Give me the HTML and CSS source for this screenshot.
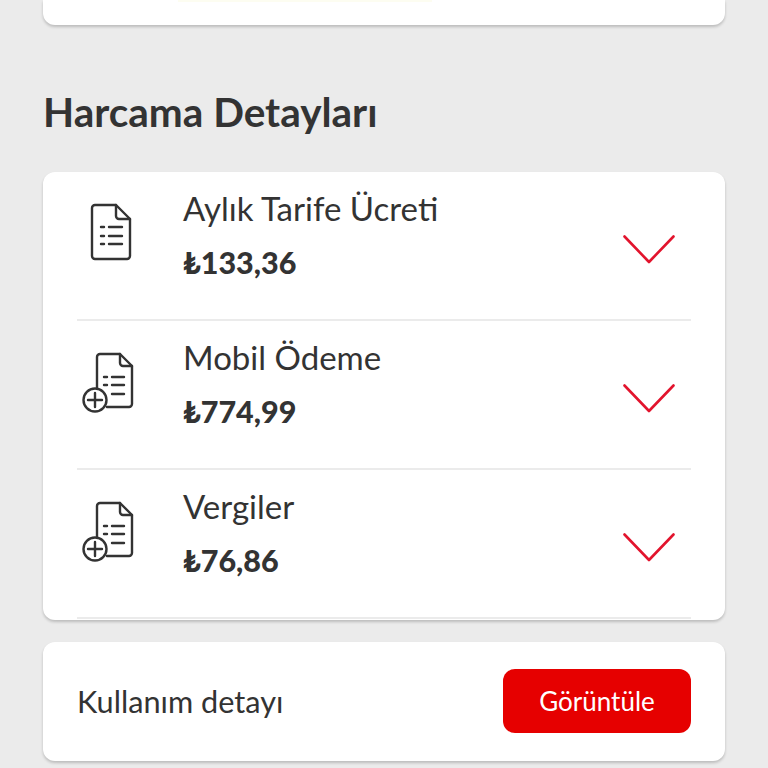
FILE: index.html
```html
<!DOCTYPE html>
<html lang="tr">
<head>
    <meta charset="UTF-8">
    <meta name="viewport" content="width=device-width, initial-scale=1.0">
    <title>Harcama Detayları</title>
    <link rel="stylesheet" href="styles.css">
</head>
<body>
    <div class="card top-card"><div class="top-glow"></div></div>

    <h1>Harcama Detayları</h1>

    <div class="card details">
        <div class="row">
            <svg class="doc-icon" width="60" height="64" viewBox="0 0 60 64" fill="none" stroke="#333" stroke-width="2.4" stroke-linecap="round" stroke-linejoin="round">
                <path d="M13 4h21l14 14v37a3 3 0 0 1-3 3H13a3 3 0 0 1-3-3V7a3 3 0 0 1 3-3z"/>
                <path d="M34 4v11a3 3 0 0 0 3 3h11"/>
                <path d="M19 26h3M27 26h13M19 35h3M27 35h13M19 43h3M27 43h13"/>
            </svg>
            <div class="row-text">
                <div class="row-title">Aylık Tarife Ücreti</div>
                <div class="row-price">₺133,36</div>
            </div>
            <svg class="chevron" width="52" height="29" viewBox="0 0 52 29" fill="none" stroke="#e2142d" stroke-width="2.6" stroke-linecap="round" stroke-linejoin="round"><path d="M1.5 1.5L26 27L50.5 1.5"/></svg>
        </div>
        <div class="row">
            <svg class="doc-icon" width="60" height="64" viewBox="0 0 60 64" fill="none" stroke="#333" stroke-width="2.4" stroke-linecap="round" stroke-linejoin="round">
                <path d="M15 38V7a3 3 0 0 1 3-3h20l12 12v38a3 3 0 0 1-3 3H25"/>
                <path d="M38 4v9a3 3 0 0 0 3 3h9"/>
                <path d="M22 27h3M30 27h12M22 35h3M30 35h12M30 44h12"/>
                <circle cx="13" cy="50" r="11.5"/>
                <path d="M13 43v14M6 50h14"/>
            </svg>
            <div class="row-text">
                <div class="row-title">Mobil Ödeme</div>
                <div class="row-price">₺774,99</div>
            </div>
            <svg class="chevron" width="52" height="29" viewBox="0 0 52 29" fill="none" stroke="#e2142d" stroke-width="2.6" stroke-linecap="round" stroke-linejoin="round"><path d="M1.5 1.5L26 27L50.5 1.5"/></svg>
        </div>
        <div class="row">
            <svg class="doc-icon" width="60" height="64" viewBox="0 0 60 64" fill="none" stroke="#333" stroke-width="2.4" stroke-linecap="round" stroke-linejoin="round">
                <path d="M15 38V7a3 3 0 0 1 3-3h20l12 12v38a3 3 0 0 1-3 3H25"/>
                <path d="M38 4v9a3 3 0 0 0 3 3h9"/>
                <path d="M22 27h3M30 27h12M22 35h3M30 35h12M30 44h12"/>
                <circle cx="13" cy="50" r="11.5"/>
                <path d="M13 43v14M6 50h14"/>
            </svg>
            <div class="row-text">
                <div class="row-title">Vergiler</div>
                <div class="row-price">₺76,86</div>
            </div>
            <svg class="chevron" width="52" height="29" viewBox="0 0 52 29" fill="none" stroke="#e2142d" stroke-width="2.6" stroke-linecap="round" stroke-linejoin="round"><path d="M1.5 1.5L26 27L50.5 1.5"/></svg>
        </div>
    </div>

    <div class="card usage">
        <span class="usage-label">Kullanım detayı</span>
        <button type="button">Görüntüle</button>
    </div>
</body>
</html>
```

FILE: styles.css
```css
html, body {
    height: 768px;
    overflow: hidden;
}
body {
    font-family: Lato, "Noto Sans", sans-serif;
    margin: 0;
    padding: 0 43px;
    background-color: #ebebeb;
    color: #333;
}
.card {
    background-color: #ffffff;
    border-radius: 12px;
    box-shadow: 0 2px 3px rgba(0, 0, 0, 0.2);
}
.top-card {
    height: 25px;
    border-radius: 0 0 12px 12px;
    display: flex;
    justify-content: center;
}
.top-glow {
    width: 254px;
    height: 2px;
    margin-right: 158px;
    background-color: #fdfdf1;
}
h1 {
    font-size: 40.5px;
    line-height: 44px;
    font-weight: 700;
    margin: 65px 0 38px 0;
}
.details {
    height: 448px;
    padding: 0 34px;
    box-sizing: border-box;
}
.row {
    height: 149px;
    box-sizing: border-box;
    border-bottom: 2px solid #ebebeb;
    display: flex;
}
.doc-icon {
    margin: 29px 0 0 5px;
    flex-shrink: 0;
}
.row-text {
    margin-left: 41px;
    flex: 1;
}
.row-title {
    font-size: 33px;
    line-height: 40px;
    margin-top: 16px;
}
.row-price {
    font-size: 30.5px;
    line-height: 38px;
    font-weight: 900;
    margin-top: 15px;
}
.chevron {
    margin: 63px 16px 0 0;
}
.usage {
    height: 119px;
    margin-top: 22px;
    padding: 0 34px;
    display: flex;
    align-items: center;
    justify-content: space-between;
}
.usage-label {
    font-size: 30.7px;
    line-height: 40px;
    margin-top: 0;
}
button {
    width: 188px;
    height: 64px;
    margin-top: -2px;
    background-color: #e60000;
    color: white;
    border: none;
    border-radius: 12px;
    font-family: inherit;
    font-size: 26px;
}
```
